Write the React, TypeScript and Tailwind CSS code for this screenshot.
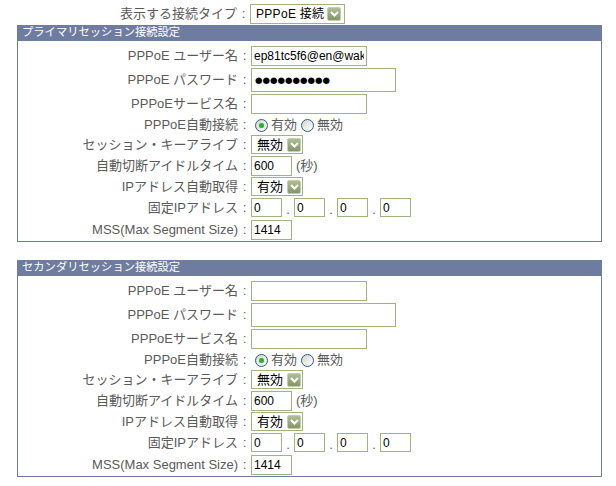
import React from "react";

const LABEL = "text-[13px] text-[#5a5a5a]";
const FIELD_BORDER = "border border-[#a0b482]";

function Arrow() {
  return (
    <span className="flex h-[14px] w-[14px] shrink-0 items-center justify-center rounded-[2px] border border-[#c3cdb0] bg-gradient-to-b from-[#b0bd96] to-[#85966a]">
      <svg width="9" height="6" viewBox="0 0 9 6">
        <path d="M1 1 L4.5 4.5 L8 1" fill="none" stroke="#fff" strokeWidth="2" />
      </svg>
    </span>
  );
}

function Select({ value, wide }: { value: string; wide?: boolean }) {
  return wide ? (
    <div className={`flex h-[20px] w-[95px] items-center ${FIELD_BORDER} bg-white pl-[5px] pr-[3px]`}>
      <span className="whitespace-nowrap text-[12px] tracking-[0.3px] text-black">{value}</span>
      <span className="ml-auto">
        <Arrow />
      </span>
    </div>
  ) : (
    <div className={`flex h-[19px] w-[52px] items-center ${FIELD_BORDER} bg-white pl-[5px] pr-[1px]`}>
      <span className="whitespace-nowrap text-[13px] text-black">{value}</span>
      <span className="ml-auto">
        <Arrow />
      </span>
    </div>
  );
}

function Radio({ checked }: { checked?: boolean }) {
  return (
    <span className="flex h-[13px] w-[13px] items-center justify-center rounded-full border border-[#2c5a8c] bg-gradient-to-br from-[#d6d6d0] to-white">
      {checked && <span className="h-[5px] w-[5px] rounded-full bg-[#2fae2f] shadow-[0_0_1px_#8be08b]" />}
    </span>
  );
}

function Row({ label, h, children }: { label: string; h: string; children: React.ReactNode }) {
  return (
    <div className={`flex items-center ${h}`}>
      <div className={`w-[220px] whitespace-nowrap text-right ${LABEL}`}>{label}</div>
      <div className={`w-[13px] text-center ${LABEL}`}>:</div>
      <div className="flex items-center">{children}</div>
    </div>
  );
}

function Section({ title, filled }: { title: string; filled?: boolean }) {
  return (
    <div className="border-x border-b border-[#6e7ca0]">
      <div className="-mx-px flex h-[16px] items-center bg-[#6e7ca0] pl-[5px] text-[11.3px] leading-none text-white">
        {title}
      </div>
      <div className="pt-[3px]">
        <Row label="PPPoE ユーザー名" h="h-[24px]">
          <input
            readOnly
            value={filled ? "ep81tc5f6@en@waku.example" : ""}
            className={`h-[20px] w-[116px] ${FIELD_BORDER} bg-white px-[2px] text-[12px] text-black outline-none`}
          />
        </Row>
        <Row label="PPPoE パスワード" h="h-[24px]">
          <div className={`flex h-[24px] w-[145px] items-center ${FIELD_BORDER} bg-white px-[3px] font-['DejaVu_Sans',sans-serif] text-[8.6px] text-black`}>
            {filled ? "●●●●●●●●●●" : ""}
          </div>
        </Row>
        <Row label="PPPoEサービス名" h="h-[23px]">
          <input readOnly value="" className={`h-[20px] w-[116px] ${FIELD_BORDER} bg-white px-[2px] text-[12px] outline-none`} />
        </Row>
        <Row label="PPPoE自動接続" h="h-[20px]">
          <div className="ml-[4px] flex items-center">
            <Radio checked />
            <span className={`ml-[3px] ${LABEL}`}>有効</span>
            <span className="ml-[4px]">
              <Radio />
            </span>
            <span className={`ml-[3px] ${LABEL}`}>無効</span>
          </div>
        </Row>
        <Row label="セッション・キーアライブ" h="h-[19px]">
          <Select value="無効" />
        </Row>
        <Row label="自動切断アイドルタイム" h="h-[23px]">
          <input readOnly value="600" className={`h-[20px] w-[41px] ${FIELD_BORDER} bg-white px-[2px] text-[12px] text-black outline-none`} />
          <span className={`ml-[4px] ${LABEL}`}>(秒)</span>
        </Row>
        <Row label="IPアドレス自動取得" h="h-[19px]">
          <Select value="有効" />
        </Row>
        <Row label="固定IPアドレス" h="h-[23px]">
          {[0, 1, 2, 3].map((i) => (
            <div key={i} className="flex items-center">
              {i > 0 && <span className={`w-[12px] pt-[4px] text-center ${LABEL}`}>.</span>}
              <input readOnly value="0" className={`h-[19px] w-[31px] ${FIELD_BORDER} bg-white px-[2px] text-[12px] text-black outline-none`} />
            </div>
          ))}
        </Row>
        <Row label="MSS(Max Segment Size)" h="h-[22px]">
          <input readOnly value="1414" className={`h-[20px] w-[41px] ${FIELD_BORDER} bg-white px-[2px] text-[12px] text-black outline-none`} />
        </Row>
      </div>
    </div>
  );
}

export default function App() {
  return (
    <div className="h-[486px] w-[616px] bg-white pl-[17px] pr-[14px] pt-[4px] font-['Liberation_Sans','Noto_Sans_CJK_JP',sans-serif]">
      <div className="ml-[2px] flex h-[20px] items-center">
        <div className={`w-[218px] whitespace-nowrap text-right ${LABEL}`}>表示する接続タイプ</div>
        <div className={`w-[13px] text-center ${LABEL}`}>:</div>
        <Select value="PPPoE 接続" wide />
      </div>
      <div className="mt-[1px]">
        <Section title="プライマリセッション接続設定" filled />
      </div>
      <div className="mt-[18px]">
        <Section title="セカンダリセッション接続設定" />
      </div>
    </div>
  );
}
